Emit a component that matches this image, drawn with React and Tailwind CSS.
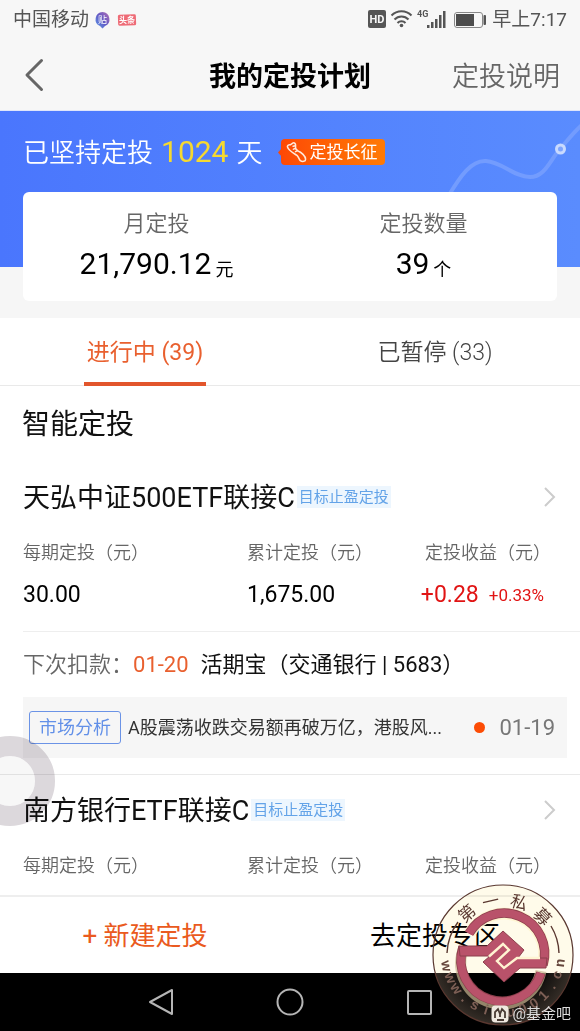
import React from "react";

function StatusBar() {
  return (
    <div className="flex h-10 items-center justify-between px-[13px] text-[19px] leading-6 text-[#555]">
      <div className="flex items-center">
        <span>中国移动</span>
        <svg className="ml-[5px]" width="17" height="18" viewBox="0 0 17 18" aria-hidden="true">
          <defs>
            <linearGradient id="bar" x1="0" y1="1" x2="1" y2="0">
              <stop offset="0" stopColor="#5a9bea" />
              <stop offset="0.5" stopColor="#6259c4" />
              <stop offset="1" stopColor="#b46fb5" />
            </linearGradient>
          </defs>
          <path d="M8.500 1a7.300 7.300 0 0 1 2.500 14L8.500 17.500L6 15A7.300 7.300 0 0 1 8.500 1z" fill="url(#bar)" />
          <text x="8.500" y="12" fontSize="9" textAnchor="middle" fill="#fff">贴</text>
        </svg>
        <svg className="ml-[6px]" width="20" height="14" viewBox="0 0 20 14" aria-hidden="true">
          <rect x="1" y="1.500" width="18" height="11" rx="1.500" fill="#ee6b76" transform="rotate(-2 10 7)" />
          <text x="10" y="10" fontSize="8" fontWeight="bold" textAnchor="middle" fill="#fff">头条</text>
        </svg>
      </div>
      <div className="flex items-center">
        <svg width="119" height="24" viewBox="0 0 119 24" aria-hidden="true" className="mr-[6px]" fill="#555">
          <rect x="1" y="2" width="18" height="18" rx="2" />
          <text x="10" y="15" fontSize="11" fontWeight="bold" textAnchor="middle" fill="#f7f7f7">HD</text>
          <g fill="none" stroke="#555" strokeWidth="2">
            <path d="M24.500 7.500a14 14 0 0 1 20 0" />
            <path d="M27.500 11.500a9.500 9.500 0 0 1 14 0" />
            <path d="M30.500 15a5.500 5.500 0 0 1 8 0" />
          </g>
          <circle cx="34.500" cy="17.500" r="1.800" />
          <text x="50" y="9" fontSize="9" fontWeight="bold">4G</text>
          <rect x="60" y="17" width="2.500" height="3" />
          <rect x="64" y="14" width="2.500" height="6" />
          <rect x="68" y="11" width="2.500" height="9" />
          <rect x="72" y="7" width="2.500" height="13" />
          <rect x="76" y="3" width="2.500" height="17" />
          <rect x="87.500" y="4.500" width="28" height="15" rx="2.500" fill="none" stroke="#888" />
          <rect x="89" y="6" width="18" height="12" fill="#4d4d4d" />
          <rect x="116.500" y="7" width="2.500" height="10" rx="1" />
        </svg>
        <span>早上7:17</span>
      </div>
    </div>
  );
}

function Header() {
  return (
    <header className="grid h-[70px] grid-cols-[1fr_auto_1fr] items-center px-5 pt-[3px] text-[27px] leading-9">
      <button type="button" aria-label="返回" className="-mt-[3px] justify-self-start">
        <svg width="28" height="36" viewBox="0 0 28 36" fill="none" stroke="#666" strokeWidth="3" strokeLinecap="round" strokeLinejoin="round">
          <path d="M21.500 3.500L7 18l14.500 14.500" />
        </svg>
      </button>
      <h1 className="font-bold text-black">我的定投计划</h1>
      <a href="#help" className="justify-self-end font-[350] text-[#666]">定投说明</a>
    </header>
  );
}

function Metric({ label, value, unit }) {
  return (
    <div>
      <dt className="text-[22px] font-[350] leading-8 text-[#666]">{label}</dt>
      <dd className="mt-1 flex justify-center gap-1 text-[30px] leading-10 text-black">
        <span>{value}</span>
        <span className="pt-2 text-lg leading-9">{unit}</span>
      </dd>
    </div>
  );
}

function Summary() {
  return (
    <section className="bg-[#f6f6f6] pb-[17px]">
      <div className="relative bg-linear-to-r from-[#4a76fd] to-[#5a8cfe] px-[23px] pt-[21px] pb-[95px]">
        <svg className="absolute top-0 right-0" width="140" height="90" viewBox="0 0 140 90" fill="none" aria-hidden="true">
          <path d="M9 84C20 66 31 49 46 50C62 51 74 66 90 66C105 66 110 49 120 38C128 29 133 22 142 14" stroke="#739cfe" strokeWidth="4" />
          <circle cx="120.500" cy="38" r="4" fill="#7fa5fe" stroke="#c9dafe" strokeWidth="3" />
        </svg>
        <div className="flex h-10 items-center">
          <p className="flex items-baseline gap-2 text-[26px] font-[350] leading-10 text-white">
            <span>已坚持定投</span>
            <span className="text-[30px] font-normal text-[#f5d930]">1024</span>
            <span>天</span>
          </p>
          <a href="#march" className="relative ml-[19px] flex h-[26px] items-center rounded bg-linear-to-r from-[#fd4805] to-[#ff7a05] pr-2 pl-1 text-[17px] leading-6 text-white">
            <svg className="absolute top-[9px] -left-[3px]" width="4" height="9" viewBox="0 0 4 9" aria-hidden="true">
              <path d="M4 0L0 4.500L4 9z" fill="#fd4805" />
            </svg>
            <svg width="23" height="24" viewBox="0 0 24 24" fill="none" stroke="#ffe9dc" strokeWidth="1.600" strokeLinecap="round" strokeLinejoin="round" aria-hidden="true">
              <path d="M2.500 6.500C2.500 5 4 4 5.500 4.500L8.500 2.500c1.500-.3 2.500.8 2.500 2v4l2.500 2.500c3.500 1 8 5.500 8 8.500 0 2.500-3.500 3-5.500 1.500-1.500-1.500-1.800-4-3.500-5.500C9.500 13.500 4 11 2.500 6.500z" />
              <path d="M10.800 5.500L8.500 6M11 8.200L8.800 9M13 10.500l-2 1.200" />
            </svg>
            <span className="ml-px">定投长征</span>
          </a>
        </div>
      </div>
      <dl className="relative mx-[23px] -mt-[75px] grid h-[109px] grid-cols-2 rounded-md bg-white pt-4 text-center">
        <Metric label="月定投" value="21,790.12" unit="元" />
        <Metric label="定投数量" value="39" unit="个" />
      </dl>
    </section>
  );
}

function Tabs() {
  return (
    <div role="tablist" className="grid grid-cols-2 border-b border-[#e9e9e9] text-[23px] leading-8">
      <button type="button" role="tab" aria-selected="true" className="-mb-px justify-self-center border-b-4 border-[#e2552c] px-[3px] pt-[19px] pb-[13px] text-[#e9602f]">
        进行中 (39)
      </button>
      <button type="button" role="tab" aria-selected="false" className="justify-self-center pt-[19px] pb-4 font-[350] text-[#444]">
        已暂停 (33)
      </button>
    </div>
  );
}

function FundTitle({ name }) {
  return (
    <a href="#fund" className="flex h-10 items-center">
      <h3 className="pt-[2px] text-[27px] leading-10 text-[#111]">{name}</h3>
      <span className="ml-[2px] bg-[#edf6fe] px-[2px] text-[15px] leading-[22px] text-[#63a3e8]">目标止盈定投</span>
      <svg className="mr-[1px] ml-auto" width="14" height="22" viewBox="0 0 14 22" fill="none" stroke="#ccc" strokeWidth="2" aria-hidden="true">
        <path d="M3 2l9 9-9 9" />
      </svg>
    </a>
  );
}

function FundStats({ values }) {
  const labels = ["每期定投（元）", "累计定投（元）", "定投收益（元）"];
  return (
    <dl className="mt-[22px] grid grid-cols-[224fr_160fr_150fr]">
      {labels.map((label, i) => (
        <div key={label} className={i === 2 ? "text-right" : ""}>
          <dt className={i === 2 ? "pr-[6px] text-lg font-[350] leading-7 text-[#666]" : "text-lg font-[350] leading-7 text-[#666]"}>{label}</dt>
          {values && i < 2 && <dd className="mt-3 text-[23px] leading-8 text-black">{values[i]}</dd>}
          {values && i === 2 && (
            <dd className="mt-3 flex items-center justify-end gap-[10px] pr-[13px] text-[23px] leading-8 text-[#e11414]">
              <span>{values[2]}</span>
              <span className="text-[17px]">{values[3]}</span>
            </dd>
          )}
        </div>
      ))}
    </dl>
  );
}

function FundList() {
  return (
    <main className="relative flex-1">
      <section>
        <h2 className="px-[22px] pt-[19px] text-[28px] leading-10 text-[#111]">智能定投</h2>
        <article className="border-b border-[#e9e9e9] pt-8 pb-4">
          <div className="px-[23px]">
            <FundTitle name="天弘中证500ETF联接C" />
            <FundStats values={["30.00", "1,675.00", "+0.28", "+0.33%"]} />
          </div>
          <div className="mt-5 ml-[23px] border-t border-[#eee] pt-[17px]">
            <p className="flex text-[22px] leading-8 text-[#111]">
              <span className="font-[350] text-[#666]">下次扣款：</span>
              <span className="text-[#e9602f]">01-20</span>
              <span className="ml-3">活期宝（交通银行 | 5683）</span>
            </p>
            <a href="#news" className="mt-4 mr-[13px] flex h-[61px] items-center bg-[#f6f6f6] pr-3 pl-[6px]">
              <span className="rounded-[3px] border border-[#6b93e6] px-[9px] text-lg leading-[31px] text-[#6290e8]">市场分析</span>
              <span className="ml-[7px] min-w-0 text-lg leading-8 text-[#333]">A股震荡收跌交易额再破万亿，港股风...</span>
              <span className="ml-auto h-[11px] w-[11px] rounded-full bg-[#fc4c05]" />
              <span className="ml-[14px] text-[22px] leading-8 text-[#777]">01-19</span>
            </a>
          </div>
        </article>
        <article className="px-[23px] pt-[15px] pb-3">
          <FundTitle name="南方银行ETF联接C" />
          <FundStats />
        </article>
      </section>
      <button type="button" aria-label="悬浮导航" className="absolute bottom-[69px] -left-[35px] h-[90px] w-[90px] rounded-full border-[20px] border-[#dcd8dc] bg-[#f7f7f7] bg-clip-padding mix-blend-multiply" />
    </main>
  );
}

const sealChars = [
  ["第", -41],
  ["一", -13],
  ["私", 17],
  ["募", 46],
];
const sealSite = [..."www.simu001.cn"];

function Seal() {
  return (
    <>
      <div className="pointer-events-none absolute right-[7px] bottom-[6px] h-[140px] w-[140px] rounded-full bg-[#fffbea] mix-blend-multiply" />
      <svg className="pointer-events-none absolute right-[6px] bottom-[5px]" width="142" height="142" viewBox="-71 -71 142 142" aria-hidden="true">
        <defs>
          <clipPath id="lower"><rect x="-71" y="18" width="142" height="53" /></clipPath>
          <radialGradient id="glow">
            <stop offset="0.66" stopColor="#3a322b" stopOpacity="0" />
            <stop offset="0.72" stopColor="#3a322b" stopOpacity="0.4" />
            <stop offset="1" stopColor="#3a322b" stopOpacity="0.9" />
          </radialGradient>
        </defs>
        <circle r="70" fill="url(#glow)" clipPath="url(#lower)" />
        <circle r="70" fill="none" stroke="#5a3830" strokeWidth="1.200" />
        <path d="M-56 -2A56 56 0 0 1 -45 -33M56 -2A56 56 0 0 0 48 -29" fill="none" stroke="#5a3830" strokeWidth="1.400" />
        <g fill="none">
          <g stroke="#fff4cf" strokeWidth="12" opacity="0.9">
            <path d="M-33.500 -21.500A40 40 0 0 1 40 8" />
          </g>
          <g stroke="#c8b48e" strokeWidth="11" opacity="0.7">
            <path d="M-40 -5A40.500 40.500 0 1 0 38 16" />
          </g>
          <g stroke="#8c3f4c" strokeWidth="9.500">
            <path d="M-34 -21.500A40.500 40.500 0 0 1 40 10" />
            <path d="M-40 -8A40.500 40.500 0 1 0 38 18" />
          </g>
          <g stroke="#b9526a" strokeWidth="8">
            <path d="M-34 -21.500A40.500 40.500 0 0 1 40 10" />
            <path d="M-40 -7A40.500 40.500 0 1 0 38 18" />
          </g>
        </g>
        <path d="M-44 -9H-16L0 -24L21 -5L15 3H44L43 13H17L1 27L-20 7L-13 1H-43z" fill="#b9526a" stroke="#8c3f4c" strokeWidth="1" />
        <path d="M-14 1.500L0 -11L6 -5L-6 6L1 13L14 3H37" fill="none" stroke="#fff4d2" strokeWidth="2.400" />
        <g fill="#5a3830" fontSize="17" textAnchor="middle">
          {sealChars.map(([c, angle]) => (
            <text key={c} y="-49" transform={`rotate(${angle})`}>{c}</text>
          ))}
        </g>
        <g fontFamily="Liberation Sans, sans-serif" fontSize="14" fontWeight="bold" textAnchor="middle">
          {sealSite.map((c, i) => (
            <text key={i} y="62" fill={i === 0 || i > 12 ? "#65463c" : "#7d5f55"} transform={`rotate(${79 - i * 12.4})`}>{c}</text>
          ))}
        </g>
      </svg>
    </>
  );
}

function BottomArea() {
  return (
    <footer className="relative">
      <div className="grid h-[78px] grid-cols-2 border-t-2 border-[#eee] bg-white pt-px text-[26px] leading-9">
        <button type="button" className="text-[#ea5a20]">+ 新建定投</button>
        <button type="button" className="text-black">去定投专区</button>
      </div>
      <nav className="flex h-[58px] items-center justify-center gap-[101px] bg-black">
        <button type="button" aria-label="返回上一页">
          <svg width="28" height="28" viewBox="0 0 28 28" fill="none" stroke="#b5b5b5" strokeWidth="2" strokeLinejoin="round"><path d="M25 2v24L3 14z" /></svg>
        </button>
        <button type="button" aria-label="主屏幕">
          <svg width="28" height="28" viewBox="0 0 28 28" fill="none" stroke="#b5b5b5" strokeWidth="2"><circle cx="14" cy="14" r="12.500" /></svg>
        </button>
        <button type="button" aria-label="最近任务">
          <svg width="28" height="28" viewBox="0 0 28 28" fill="none" stroke="#b5b5b5" strokeWidth="2"><rect x="3" y="3" width="23" height="23" rx="1" /></svg>
        </button>
      </nav>
      <Seal />
      <div className="absolute right-[9px] bottom-[7px] flex items-center gap-1 text-[15px] leading-5 text-[#ddd]">
        <svg width="18" height="18" viewBox="0 0 18 18" fill="none" aria-hidden="true">
          <rect x="0.500" y="0.500" width="17" height="17" rx="4" fill="#eee8df" />
          <path d="M4 13V7l3-3 2 5 2-5 3 3v6M6 15h7M9 9v3" stroke="#493b34" strokeWidth="1.800" />
        </svg>
        <span>@基金吧</span>
      </div>
    </footer>
  );
}

export default function App() {
  return (
    <div className="flex min-h-screen flex-col overflow-x-hidden bg-white font-['Roboto','Noto_Sans_CJK_SC',sans-serif]">
      <div className="border-b border-[#dfe5fa] bg-[#f7f7f7]">
        <StatusBar />
        <Header />
      </div>
      <Summary />
      <Tabs />
      <FundList />
      <BottomArea />
    </div>
  );
}
